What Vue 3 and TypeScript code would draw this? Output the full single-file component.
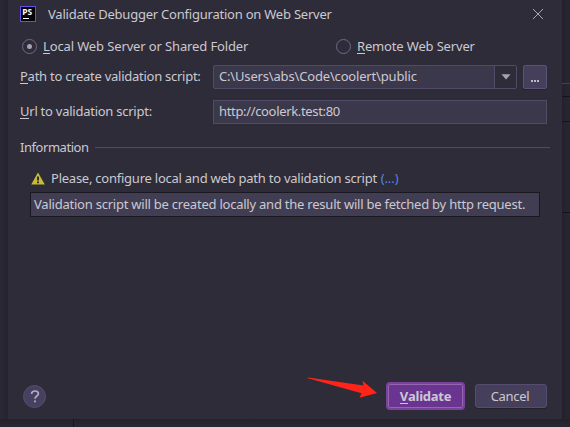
<script setup lang="ts">
import { ref } from 'vue'

const mode = ref<'local' | 'remote'>('local')
const path = 'C:\\Users\\abs\\Code\\coolert\\public'
const url = 'http://coolerk.test:80'
</script>

<template>
  <div class="screen">
    <aside class="ide-left"></aside>
    <main class="dialog">
      <header class="titlebar">
        <svg class="logo" width="16" height="16" viewBox="0 0 16 16">
          <rect x=".5" y=".5" width="15" height="15" fill="#050408" stroke="#6650df" />
          <text x="2.2" y="8.9" font-family="Open Sans, sans-serif" font-size="8.4" font-weight="700" fill="#fff">PS</text>
          <path d="M3 12.5h6" stroke="#fff" />
        </svg>
        <h1><span class="t-title">Validate Debugger Configuration on Web Server</span></h1>
        <svg class="close" width="12" height="12" viewBox="0 0 12 12"><path d="M1 1l10 10M11 1L1 11" stroke="#aaa8b1" fill="none" /></svg>
      </header>

      <div class="radios">
        <button class="radio" @click="mode = 'local'">
          <i class="circle" :class="{ on: mode === 'local' }"></i><span class="t-local"><u>L</u>ocal Web Server or Shared Folder</span>
        </button>
        <button class="radio second" @click="mode = 'remote'">
          <i class="circle" :class="{ on: mode === 'remote' }"></i><span class="t-remote"><u>R</u>emote Web Server</span>
        </button>
      </div>

      <div class="row first">
        <label><span class="t-path"><u>P</u>ath to create validation script:</span></label>
        <div class="combo">
          <div class="value"><span class="t-value">{{ path }}</span></div>
          <div class="drop"><svg width="10" height="6" viewBox="0 0 10 6"><path d="M.5 .3h9L5 5.5z" fill="#a6a1b5" /></svg></div>
        </div>
        <button class="browse"><i></i><i></i><i></i></button>
      </div>
      <div class="row">
        <label><span class="t-url"><u>U</u>rl to validation script:</span></label>
        <div class="input"><span class="t-address">{{ url }}</span></div>
      </div>

      <div class="separator"><span class="t-info">Information</span><hr /></div>

      <div class="warning">
        <svg width="14" height="13" viewBox="0 0 14 13">
          <path d="M7 .5L13.8 12.5H.2z" fill="#c8bd32" />
          <path d="M6 4.5h2v4H6zM6 9.5h2v1.7H6z" fill="#2e2c39" />
        </svg>
        <span class="t-warn">Please, configure local and web path to validation script <a>(...)</a></span>
      </div>
      <div class="result"><span class="t-result">Validation script will be created locally and the result will be fetched by http request.</span></div>

      <footer>
        <button class="help"><svg width="10" height="13" viewBox="0 0 10 13"><path d="M1.500 3.800C1.700 1.900 3 1 5 1s3.400 1 3.400 2.800C8.400 6 5 6.100 5 8.700" fill="none" stroke="#b4afc0" stroke-width="1.7" /><path d="M4.100 10.500h1.800v1.800H4.100z" fill="#b4afc0" /></svg></button>
        <svg class="arrow" width="72" height="20" viewBox="0 0 72 20"><path d="M0 1Q1 .2 3 .7L56.500 8.500 55.500 3.700 70 16 52.500 20.800 54.500 16.300Z" fill="#ff2418" /></svg>
        <button class="validate"><span class="t-validate"><u>V</u>alidate</span></button>
        <button class="cancel"><span class="t-cancel">Cancel</span></button>
      </footer>
    </main>
    <aside class="ide-right"><i></i><i></i><i></i><i></i></aside>
    <div class="ide-bottom"></div>
  </div>
</template>

<style>
body { background: #272532; overflow: hidden; }
</style>

<style scoped>
* { box-sizing: border-box; }
.screen {
  width: 570px; height: 427px; display: grid;
  grid-template: 419px 8px / 8px 554px 8px;
  background: #272530; overflow: hidden;
  font: 13px/17px "Noto Sans", sans-serif; color: #cbc9d0;
}
button { font: inherit; color: inherit; padding: 0; margin: 0; border: 0; background: none; }
span { white-space: nowrap; }
u { text-decoration: none; box-shadow: 0 1px #cbc9d0; display: inline-block; height: 15px; line-height: 17px; }
.t-title { letter-spacing: -.225px; }
.t-local { letter-spacing: -.13px; }
.t-remote { letter-spacing: -.16px; }
.t-path { letter-spacing: -.26px; }
.t-value { letter-spacing: -.17px; }
.t-url { letter-spacing: -.25px; }
.t-address { letter-spacing: -.34px; }
.t-info { letter-spacing: -.45px; }
.t-warn { letter-spacing: -.24px; }
.t-warn a { letter-spacing: -.1px; margin-left: .6px; }
.t-result { letter-spacing: -.228px; }
.t-validate { letter-spacing: -.25px; }
.t-cancel { letter-spacing: -.3px; }
.ide-left { background: linear-gradient(90deg, #2a2835, #282631 55%, #25232d); }
.dialog { background: #2e2c39; padding: 0 12px; display: flex; flex-direction: column; }
.titlebar { height: 28px; display: flex; align-items: center; flex: none; }
.logo { margin-right: 12px; flex: none; }
h1 { font: inherit; margin: 0; flex: 1; padding-top: 1px; }
.close { margin-right: 6px; flex: none; }
.radios { height: 37px; padding-left: 2px; display: flex; align-items: center; flex: none; }
.radio { display: flex; align-items: center; width: 314px; flex: none; gap: 6px; }
.second { width: 160px; }
.circle { width: 15px; height: 15px; border: 1px solid #716887; border-radius: 50%; display: grid; place-items: center; flex: none; }
.circle.on::after { content: ""; width: 5px; height: 5px; border-radius: 50%; background: #a7a1b4; }
.row { height: 24px; display: flex; align-items: center; flex: none; margin-bottom: 11px; }
.row label { width: 193px; flex: none; padding-bottom: 2px; }
.combo { width: 304px; height: 24px; border: 1px solid #504b67; border-radius: 2px; display: flex; background: #3b384c; }
.value { flex: 1; padding: 2px 5px; }
.drop { width: 22px; border-left: 1px solid #504b67; background: #2e2c39; display: grid; place-items: center; }
.browse { width: 24px; height: 24px; border: 1px solid #5b5276; border-radius: 2px; background: #453f5c; margin-left: 6px; display: flex; gap: 1px; align-items: flex-end; justify-content: center; padding-bottom: 6px; box-shadow: 0 1px #25232d; }
.browse i { width: 2px; height: 2px; background: #bbb8c5; }
.input { width: 334px; height: 24px; border: 1px solid #504b67; background: #3b384c; padding: 2px 5px; }
.separator { height: 17px; display: flex; align-items: center; margin-top: 4px; flex: none; }
.separator hr { flex: 1; height: 1px; border: 0; background: #504b62; margin: 0 0 0 6px; }
.warning { display: flex; align-items: center; margin: 14px 0 0 11px; height: 17px; gap: 6px; flex: none; }
.warning svg { flex: none; }
a { color: #5486e9; }
.result { width: 510px; height: 25px; margin: 5px 0 0 10px; border: 1px solid #191720; background: #413e54; padding: 3px; flex: none; }
footer { display: flex; margin-top: auto; height: 47px; padding: 10px 3px 0 3px; }
.help { width: 23px; height: 23px; border-radius: 50%; border: 1px solid #554c70; background: #474060; margin-top: 3px; display: grid; place-items: center; }
.arrow { overflow: visible; margin: -5px 7px 0 261px; }
.validate { width: 79px; height: 28px; border: 2px solid #7b429d; border-radius: 4px; background: #693590; box-shadow: inset 0 0 0 1px #9466ae; font-weight: 700; flex: none; }
.cancel { width: 72px; height: 24px; margin: 2px 0 0 10px; padding-right: 2px; border: 1px solid #554d70; border-radius: 3px; background: #453f5c; box-shadow: 0 1px #24222c; flex: none; }
.ide-right { background: linear-gradient(90deg, #23212a, #272530 70%); display: grid; grid-template-rows: 84px 13px 25px 91px 1fr; }
.ide-right i { border-bottom: 1px solid #14121c; }
.ide-right i:first-child { border-color: #444150; }
.ide-bottom { grid-column: 1 / -1; background: linear-gradient(90deg, transparent 73px, #171520 73px 74px, transparent 74px), linear-gradient(#23212a, #282631); }
</style>
